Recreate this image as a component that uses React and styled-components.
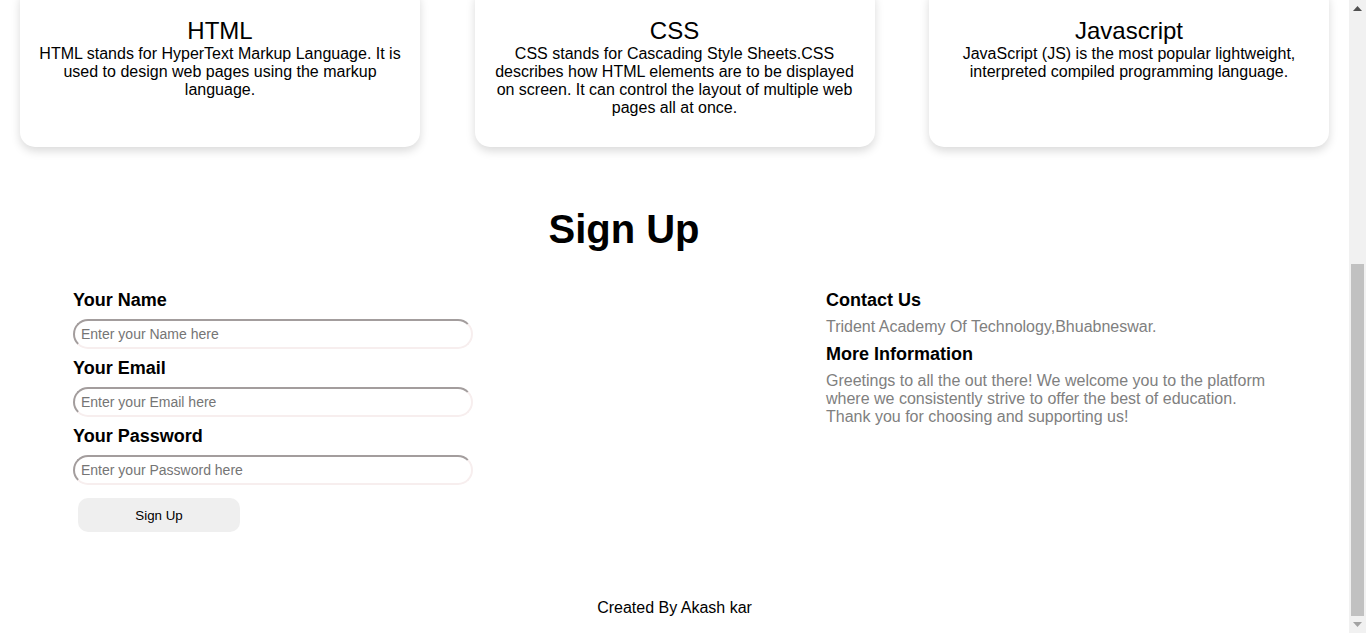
import React, { useLayoutEffect, useRef, useState } from 'react';
import styled, { createGlobalStyle } from 'styled-components';

const courses = [
	{
		id: 'html',
		title: 'HTML',
		text: 'HTML stands for HyperText Markup Language. It is used to design web pages using the markup language.',
	},
	{
		id: 'css',
		title: 'CSS',
		text: 'CSS stands for Cascading Style Sheets.CSS describes how HTML elements are to be displayed on screen. It can control the layout of multiple web pages all at once.',
	},
	{
		id: 'js',
		title: 'Javascript',
		text: 'JavaScript (JS) is the most popular lightweight, interpreted compiled programming language.',
	},
];

const fields = [
	{ id: 'name', label: 'Your Name', type: 'text', placeholder: 'Enter your Name here' },
	{ id: 'email', label: 'Your Email', type: 'email', placeholder: 'Enter your Email here' },
	{ id: 'password', label: 'Your Password', type: 'password', placeholder: 'Enter your Password here' },
];

const App = () => {
	const pageRef = useRef(null);
	const [thumb, setThumb] = useState(0.58);

	// the screenshot shows the page scrolled all the way down
	useLayoutEffect(() => {
		const el = pageRef.current;
		if (!el) return;
		el.scrollTop = el.scrollHeight;
		setThumb(el.clientHeight / el.scrollHeight);
	}, []);

	return (
		<>
			<GlobalStyle />
			<Window>
				<Page ref={pageRef}>
					<Nav>
						<Brand>Learn Web</Brand>
					</Nav>
					<Hero>
						<HeroTitle>Courses</HeroTitle>
					</Hero>
					<Cards>
						{courses.map((c) => (
							<Card key={c.id}>
								<CardTitle>{c.title}</CardTitle>
								<CardText>{c.text}</CardText>
							</Card>
						))}
					</Cards>

					<SignUp>
						<Heading>Sign Up</Heading>
						<Columns>
							<Form onSubmit={(e) => e.preventDefault()}>
								{fields.map((f) => (
									<React.Fragment key={f.id}>
										<Label htmlFor={f.id}>{f.label}</Label>
										<Input id={f.id} type={f.type} placeholder={f.placeholder} />
									</React.Fragment>
								))}
								<Button type="submit">Sign Up</Button>
							</Form>
							<Info>
								<InfoTitle>Contact Us</InfoTitle>
								<InfoText>Trident Academy Of Technology,Bhuabneswar.</InfoText>
								<InfoTitle>More Information</InfoTitle>
								<InfoText>
									Greetings to all the out there! We welcome you to the platform where we consistently strive to offer the best of education. Thank you for choosing and supporting us!
								</InfoText>
							</Info>
						</Columns>
					</SignUp>

					<Footer>Created By Akash kar</Footer>
				</Page>

				<ScrollBar>
					<Arrow>
						<svg width="9" height="5" viewBox="0 0 9 5"><path d="M0 5 L4.5 0 L9 5 Z" fill="#505050" /></svg>
					</Arrow>
					<Track>
						<Thumb style={{ height: `${thumb * 100}%` }} />
					</Track>
					<Arrow>
						<svg width="9" height="5" viewBox="0 0 9 5"><path d="M0 0 L4.5 5 L9 0 Z" fill="#a3a3a3" /></svg>
					</Arrow>
				</ScrollBar>
			</Window>
		</>
	);
};

const GlobalStyle = createGlobalStyle`
	* {
		box-sizing: border-box;
	}
	html, body {
		margin: 0;
		padding: 0;
		overflow: hidden;
	}
	body {
		font-family: "Liberation Sans", Arial, sans-serif;
		color: #000;
		background: #fff;
	}
`;

const Window = styled.div`
	display: flex;
	height: 100vh;
`;

const Page = styled.div`
	flex: 1;
	min-width: 0;
	overflow: hidden;
`;

const ScrollBar = styled.div`
	width: 17px;
	flex-shrink: 0;
	display: flex;
	flex-direction: column;
	background: #f1f1f1;
`;

const Arrow = styled.div`
	height: 17px;
	flex-shrink: 0;
	display: flex;
	align-items: center;
	justify-content: center;
`;

const Track = styled.div`
	flex: 1;
	display: flex;
	flex-direction: column;
	justify-content: flex-end;
	padding: 0 2px;
`;

const Thumb = styled.div`
	background: #c1c1c1;
`;

const Nav = styled.header`
	height: 60px;
	display: flex;
	align-items: center;
	padding: 0 40px;
	background: #222;
`;

const Brand = styled.span`
	color: #fff;
	font-size: 22px;
	font-weight: bold;
`;

const Hero = styled.section`
	height: 331px;
	display: flex;
	align-items: center;
	justify-content: center;
`;

const HeroTitle = styled.h1`
	margin: 0;
	font-size: 40px;
`;

const Cards = styled.section`
	display: flex;
	justify-content: space-between;
	padding: 40px 20px 0;
`;

const Card = styled.div`
	width: 400px;
	padding: 30px 17px 30px;
	background: #fff;
	border-radius: 15px;
	box-shadow: 0 4px 10px rgba(0, 0, 0, 0.15);
	text-align: center;
`;

const CardTitle = styled.h2`
	margin: 0;
	font-size: 24px;
	font-weight: normal;
`;

const CardText = styled.p`
	margin: 0;
	font-size: 16px;
`;

const SignUp = styled.section`
	padding: 0 73px;
`;

const Heading = styled.h1`
	margin: 59px 101px 37px 0;
	font-size: 40px;
	line-height: 46px;
	font-weight: bold;
	text-align: center;
`;

const Columns = styled.div`
	display: flex;
	align-items: flex-start;
`;

const Form = styled.form`
	width: 753px;
	flex-shrink: 0;
	display: flex;
	flex-direction: column;
	align-items: flex-start;
`;

const Label = styled.label`
	font-size: 18px;
	line-height: 22px;
	font-weight: bold;
	margin-bottom: 8px;
`;

const Input = styled.input`
	width: 400px;
	height: 30px;
	margin-bottom: 8px;
	padding: 0 6px;
	border: 2px inset #f7eeee;
	border-radius: 15px;
	font-family: "Liberation Sans", Arial, sans-serif;
	font-size: 14px;
	outline: none;
	&::placeholder {
		color: #757575;
	}
`;

const Button = styled.button`
	width: 162px;
	height: 34px;
	margin: 5px 0 0 5px;
	border: none;
	border-radius: 10px;
	background: #efefef;
	font-family: "Liberation Sans", Arial, sans-serif;
	font-size: 13.33px;
	color: #000;
	cursor: pointer;
`;

const Info = styled.div`
	width: 450px;
	flex-shrink: 0;
`;

const InfoTitle = styled.h3`
	margin: 0 0 7px;
	font-size: 18px;
	line-height: 22px;
	font-weight: bold;
`;

const InfoText = styled.p`
	margin: 0 0 7px;
	font-size: 16px;
	color: #808080;
`;

const Footer = styled.footer`
	padding: 67px 0 16px;
	text-align: center;
	font-size: 16px;
`;

export default App;
